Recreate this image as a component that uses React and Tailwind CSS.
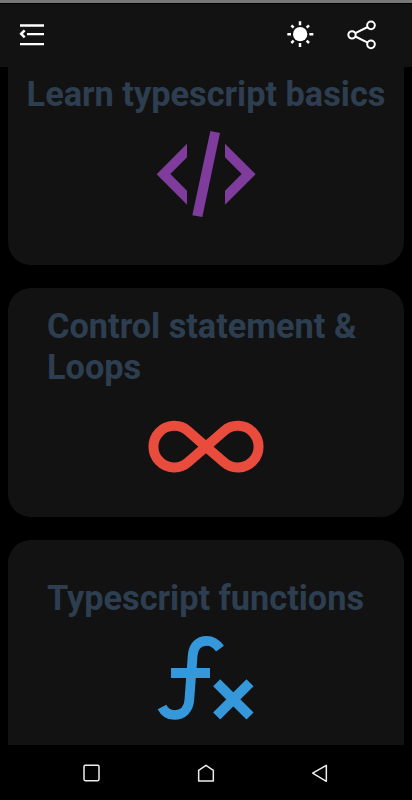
function MenuFoldIcon() {
  return (
    <svg className="h-6 w-[26px]" viewBox="57 69 78 72" fill="none" stroke="#fff">
      <path d="M60 76.500H132M81 102.500H132M60 132.500H132" strokeWidth="7" />
      <path d="M74 91L63.500 101.500L74 112" strokeWidth="7.500" />
    </svg>
  );
}

function SunIcon() {
  return (
    <svg className="h-7 w-7" viewBox="47 63 84 84" fill="none" stroke="#fff" strokeWidth="7.500">
      <circle cx="89.500" cy="102.500" r="21.500" fill="#fff" stroke="none" />
      <path d="M89 64V76M89 129V141M51 103H62M117 103H129M63 76L70 83M116 76L109 83M63 129L70 122M116 129L109 122" />
    </svg>
  );
}

function ShareIcon() {
  return (
    <svg className="h-[30px] w-[30px]" viewBox="231 60 90 90" fill="none" stroke="#fff" strokeWidth="6">
      <circle cx="246" cy="104.500" r="11" />
      <circle cx="303" cy="76" r="11.500" />
      <circle cx="303" cy="133" r="11.500" />
      <path d="M256 99.500L293 81M256 109.500L293 128" />
    </svg>
  );
}

function CodeIcon() {
  return (
    <svg className="mr-[2px] h-[110px] w-[130px]" viewBox="0 0 390 330" fill="#803c9c">
      <path d="M50 162.500L141 71V112L91 162L141 212V254Z" />
      <path d="M255 71L347 162.500L255 254V212L305 162L255 112Z" />
      <path d="M211 33L240 39L187 291L157 286Z" />
    </svg>
  );
}

function InfinityIcon() {
  return (
    <svg className="mr-[2px] h-[90px] w-[140px]" viewBox="0 0 420 270" fill="none" stroke="#e94c3d" strokeWidth="30">
      <path d="M213 140L159 93A62.500 62.500 0 1 0 159 187L267 93A62.500 62.500 0 1 1 267 187Z" />
    </svg>
  );
}

function FunctionIcon() {
  return (
    <svg className="mr-[2px] h-[120px] w-[130px]" viewBox="0 0 390 360" fill="none" stroke="#3598db" strokeWidth="29">
      <path d="M240 71C230 57 217 47.500 200 47.500C176 47.500 160 64 158 91L148 225C146 253 128 270 103 270C86 270 73 260 66 246" />
      <path d="M93 144H210" strokeWidth="30" />
      <path d="M230 173L330 273M330 173L230 273" strokeWidth="30" />
    </svg>
  );
}

function Card({ title, className, children }) {
  return (
    <section className={`flex h-[229px] shrink-0 flex-col items-center rounded-[23px] bg-[#121212] ${className}`}>
      {title}
      {children}
    </section>
  );
}

export default function App() {
  return (
    <div className="flex h-[800px] w-[412px] flex-col overflow-hidden bg-black font-['Roboto',sans-serif]">
      <div className="h-[3px] shrink-0 bg-[#777]" />
      <header className="flex h-16 shrink-0 items-center border-t border-black bg-[#121212] pb-px pl-[19px] pr-[35px]">
        <button aria-label="Menu"><MenuFoldIcon /></button>
        <button aria-label="Theme" className="ml-auto"><SunIcon /></button>
        <button aria-label="Share" className="ml-[33px]"><ShareIcon /></button>
      </header>
      <main className="min-h-0 flex-1 overflow-hidden px-2">
        <div className="-mt-[31px] flex flex-col gap-[23px] text-[34.3px] font-bold leading-[41px] text-[#2d3e50]">
          <Card className="pt-[38px]" title={<h2 className="mb-[5px] whitespace-nowrap">Learn typescript basics</h2>}>
            <CodeIcon />
          </Card>
          <Card className="pt-[18px]" title={<h2 className="mb-3 w-[318px]">Control statement &amp;<br />Loops</h2>}>
            <InfinityIcon />
          </Card>
          <Card className="pt-[38px]" title={<h2 className="mb-[6px] w-[318px] whitespace-nowrap">Typescript functions</h2>}>
            <FunctionIcon />
          </Card>
        </div>
      </main>
      <nav className="flex h-[55px] shrink-0 items-center justify-between bg-black pl-[82px] pr-[83px]">
        <svg className="h-5 w-5" viewBox="66 82 60 60" fill="none" stroke="#eee" strokeWidth="4.500">
          <rect x="72" y="89" width="45" height="46" rx="4" />
        </svg>
        <svg className="h-5 w-5" viewBox="408 82 60 60" fill="none" stroke="#eee" strokeWidth="4.500" strokeLinejoin="round">
          <path d="M416 104L438 89L460 104V136H416Z" />
        </svg>
        <svg className="h-5 w-5" viewBox="747 82 60 60" fill="none" stroke="#eee" strokeWidth="4.500" strokeLinejoin="round">
          <path d="M758 112.500L799 89V137Z" />
        </svg>
      </nav>
    </div>
  );
}
